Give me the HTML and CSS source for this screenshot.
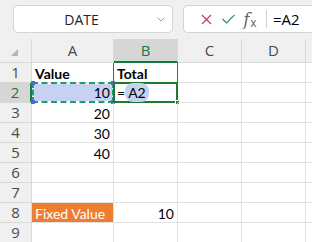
FILE: index.html
```html
<!DOCTYPE html>
<html lang="en">
<head>
    <meta charset="UTF-8">
    <title>Sheet - DATE</title>
    <link rel="stylesheet" href="styles.css">
</head>
<body>
    <div class="toolbar">
        <div class="name-box">
            <span class="name-text">DATE</span>
            <svg class="chevron" width="8" height="5" viewBox="0 0 8 5"><path d="M0.5 0.5 L4 4 L7.5 0.5" fill="none" stroke="#9a9a9a" stroke-width="1"/></svg>
        </div>
        <div class="formula-box">
            <span class="fx-btn">
                <svg width="11" height="11" viewBox="0 0 11 11"><path d="M1 1 L10 10 M10 1 L1 10" stroke="#d13a54" stroke-width="1.2"/></svg>
            </span>
            <span class="fx-btn">
                <svg width="13" height="10" viewBox="0 0 13 10"><path d="M0.5 5 L4.5 9 L12.5 0.8" fill="none" stroke="#2e8b68" stroke-width="1.2"/></svg>
            </span>
            <span class="fx-btn fx-label"><i>f</i><span class="fx-x">x</span></span>
            <span class="fx-sep"></span>
            <span class="formula-text">=A2</span>
        </div>
    </div>

    <div class="sheet">
        <div class="corner">
            <svg width="7" height="7" viewBox="0 0 7 7"><path d="M7 0 L7 7 L0 7 Z" fill="#b4b4b4"/></svg>
        </div>
        <div class="col-head">A</div>
        <div class="col-head active">B</div>
        <div class="col-head">C</div>
        <div class="col-head">D</div>
        <div class="col-head"></div>

        <div class="row-head">1</div>
        <div class="cell bold">Value</div>
        <div class="cell bold framed">Total</div>
        <div class="cell"></div>
        <div class="cell"></div>
        <div class="cell"></div>

        <div class="row-head active">2</div>
        <div class="cell num ref">10
            <i class="dot tl"></i><i class="dot tr"></i><i class="dot bl"></i><i class="dot br"></i>
        </div>
        <div class="cell current">=<span class="ref-pill">A2</span><i class="fill-handle"></i></div>
        <div class="cell"></div>
        <div class="cell"></div>
        <div class="cell"></div>

        <div class="row-head">3</div>
        <div class="cell num">20</div>
        <div class="cell"></div>
        <div class="cell"></div>
        <div class="cell"></div>
        <div class="cell"></div>

        <div class="row-head">4</div>
        <div class="cell num">30</div>
        <div class="cell"></div>
        <div class="cell"></div>
        <div class="cell"></div>
        <div class="cell"></div>

        <div class="row-head">5</div>
        <div class="cell num">40</div>
        <div class="cell"></div>
        <div class="cell"></div>
        <div class="cell"></div>
        <div class="cell"></div>

        <div class="row-head">6</div>
        <div class="cell"></div>
        <div class="cell"></div>
        <div class="cell"></div>
        <div class="cell"></div>
        <div class="cell"></div>

        <div class="row-head">7</div>
        <div class="cell"></div>
        <div class="cell"></div>
        <div class="cell"></div>
        <div class="cell"></div>
        <div class="cell"></div>

        <div class="row-head">8</div>
        <div class="cell orange">Fixed Value</div>
        <div class="cell num">10</div>
        <div class="cell"></div>
        <div class="cell"></div>
        <div class="cell"></div>

        <div class="row-head">9</div>
        <div class="cell"></div>
        <div class="cell"></div>
        <div class="cell"></div>
        <div class="cell"></div>
        <div class="cell"></div>
    </div>
</body>
</html>
```

FILE: styles.css
```css
* {
    margin: 0;
    padding: 0;
    box-sizing: border-box;
}

body {
    width: 312px;
    height: 242px;
    overflow: hidden;
    background: #ffffff;
    font-family: "Open Sans", "Noto Sans", sans-serif;
    color: #222;
}

/* toolbar with name box and formula bar */
.toolbar {
    display: flex;
    gap: 10px;
    height: 39px;
    padding: 5px 0 6px 13px;
    background: #f0f0f0;
}

.name-box {
    width: 160px;
    display: flex;
    align-items: center;
    background: #fff;
    border: 1px solid #d4d4d4;
    border-radius: 5px;
}

.name-text {
    flex: 1;
    text-align: center;
    font-size: 14px;
    color: #242424;
    padding-left: 4px;
}

.chevron {
    margin: 0 7px 0 12px;
}

/* runs off the right edge of the window */
.formula-box {
    flex: 1;
    display: flex;
    align-items: center;
    background: #fff;
    border: 1px solid #d4d4d4;
    border-right: none;
    border-radius: 5px 0 0 5px;
    padding-left: 11px;
}

.fx-btn {
    width: 22px;
    display: flex;
    justify-content: center;
    align-items: center;
}

.fx-label {
    font-family: "DejaVu Serif", serif;
    font-size: 16px;
    color: #616161;
}

.fx-label i {
    font-style: italic;
}

.fx-x {
    font-family: "Open Sans", sans-serif;
    font-size: 12px;
    margin-top: 6px;
    margin-left: 1px;
}

.fx-sep {
    width: 1px;
    height: 18px;
    background: #d0d0d0;
    margin: 0 6px 0 5px;
}

.formula-text {
    font-size: 15px;
    color: #000;
}

/* sheet grid, last column is cut by the window */
.sheet {
    display: grid;
    grid-template-columns: 32px 82px 64px 64px 64px 1fr;
    grid-template-rows: 24px repeat(9, 20px);
}

.corner {
    background: #f0f0f0;
    border-right: 1px solid #d8d8d8;
    border-bottom: 1px solid #d8d8d8;
    display: flex;
    justify-content: flex-end;
    align-items: flex-end;
    padding: 0 13px 6px 0;
}

.col-head {
    background: #f0f0f0;
    border-right: 1px solid #d8d8d8;
    border-bottom: 1px solid #d8d8d8;
    text-align: center;
    font-size: 15px;
    line-height: 23px;
    color: #4a4a4a;
}

.col-head.active {
    background: #d6d6d6;
    color: #107c41;
    border-bottom: 2px solid #107c41;
}

.row-head {
    background: #f0f0f0;
    border-right: 1px solid #d8d8d8;
    border-bottom: 1px solid #d8d8d8;
    text-align: center;
    font-size: 15px;
    line-height: 19px;
    color: #4a4a4a;
}

.row-head.active {
    background: #d6d6d6;
    color: #107c41;
    border-right: 2px solid #107c41;
}

.cell {
    border-right: 1px solid #e1e1e1;
    border-bottom: 1px solid #e1e1e1;
    font-family: Lato, "Liberation Sans", sans-serif;
    font-size: 14px;
    line-height: 19px;
    padding: 1px 3px 0 3px;
    color: #000;
    white-space: nowrap;
    position: relative;
}

.cell.bold {
    font-weight: bold;
}

.cell.framed {
    border-left: 1px solid #5a5a5a;
    border-right: 1px solid #5a5a5a;
    margin-left: -1px;
}

.cell.num {
    text-align: right;
}

.cell.orange {
    background: #ed7d31;
    color: #fff;
}

/* referenced cell A2 */
.cell.ref {
    border: 2px dashed #1e9e6a;
    background: #c7d1f1;
    background-clip: padding-box;
    margin: -1px 0 0 0;
    line-height: 18px;
    padding: 0 2px 0 0;
}

.dot {
    position: absolute;
    width: 4px;
    height: 4px;
    background: #4d6bd6;
}

.dot.tl { left: -3px; top: -3px; }
.dot.tr { right: -3px; top: -3px; }
.dot.bl { left: -3px; bottom: -3px; }
.dot.br { right: -3px; bottom: -3px; }

/* active cell B2 */
.cell.current {
    border: 2px solid #1f7a2e;
    margin: -1px 0 0 -1px;
    padding: 0 2px;
    line-height: 18px;
}

.ref-pill {
    background: #c7d1f1;
    border-radius: 8px;
    padding: 1px 3px;
}

.fill-handle {
    position: absolute;
    right: -4px;
    bottom: -4px;
    width: 5px;
    height: 5px;
    background: #1f7a2e;
    border: 1px solid #fff;
}
```
